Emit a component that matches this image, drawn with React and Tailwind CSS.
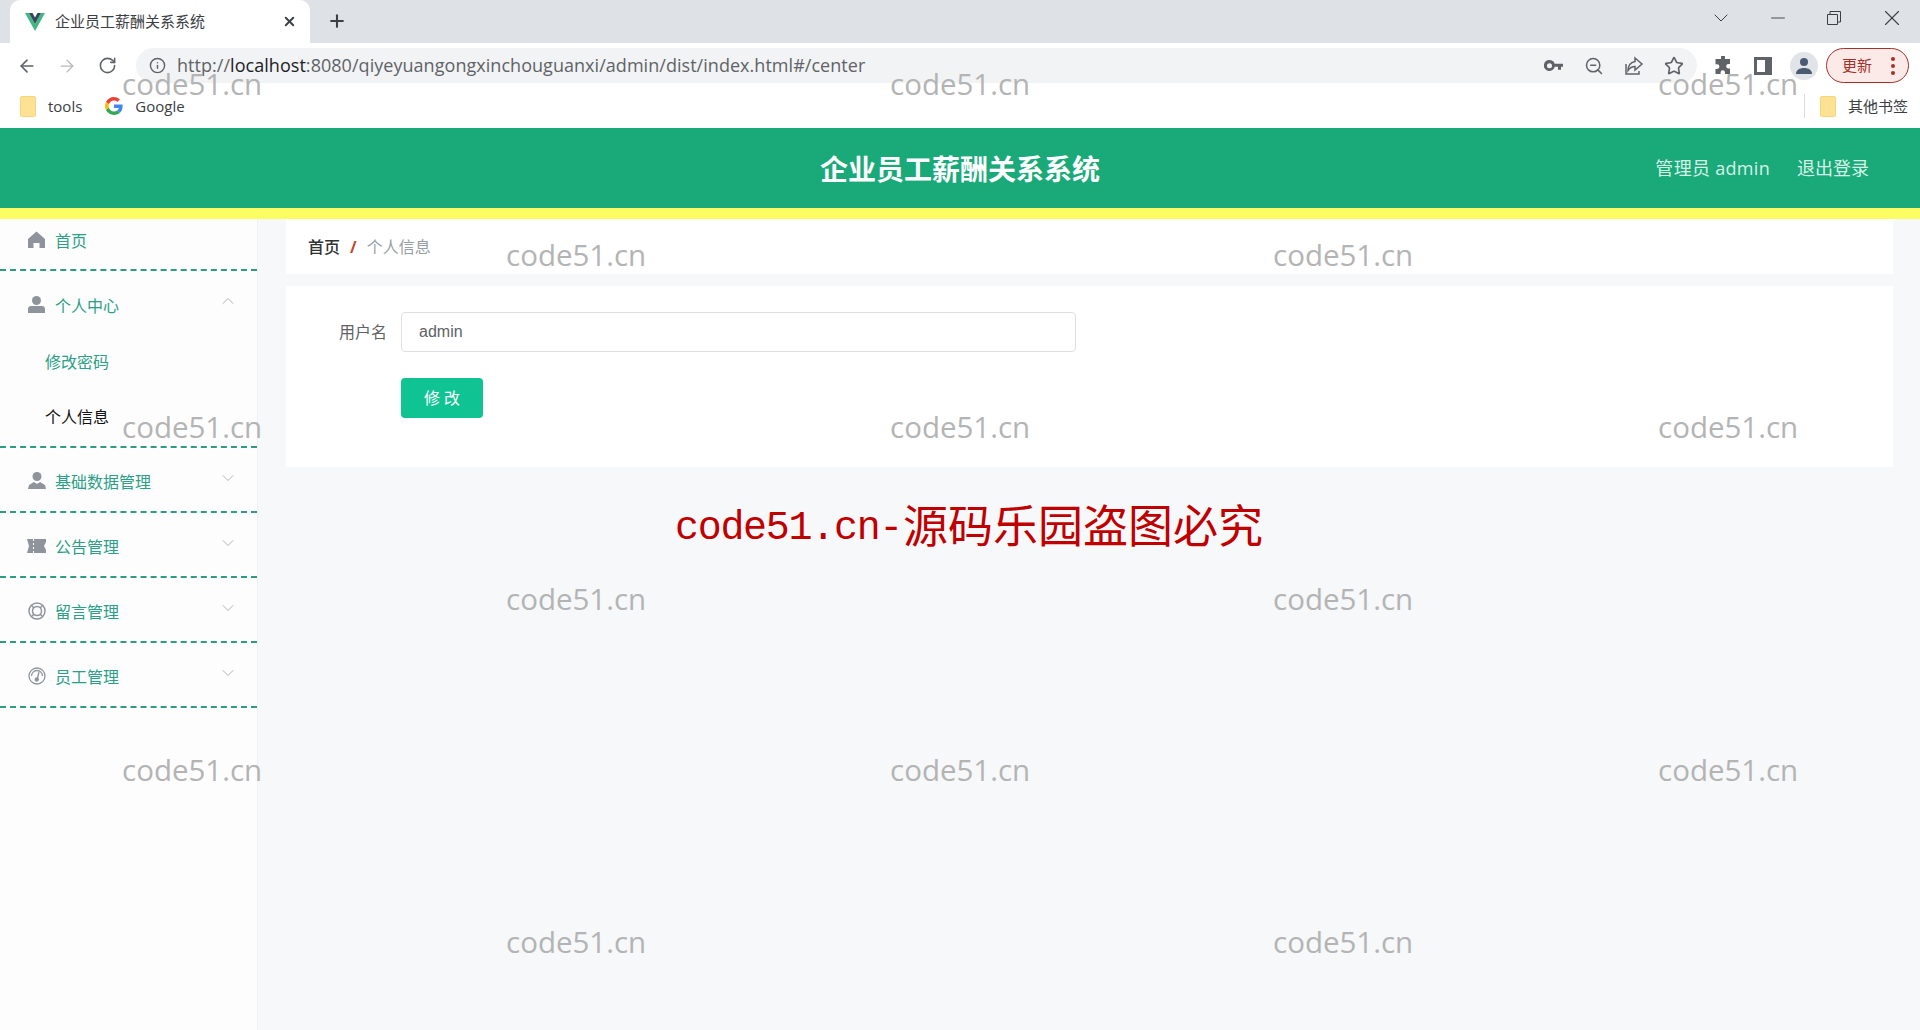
import { ArrowLeft, ArrowRight, RotateCw, Info, ZoomOut, Star, ChevronDown, ChevronUp, Minus, X, Plus } from 'lucide-react';

const cjk = "font-['Open_Sans','Noto_Sans_CJK_SC',sans-serif]";

function Folder() {
    return <div className="w-[16px] h-[21px] rounded-[2px] bg-[#fde293] border border-[#f5d778]"></div>;
}

function GoogleG() {
    return (
        <svg width="18" height="18" viewBox="0 0 48 48">
            <path fill="#EA4335" d="M24 9.5c3.5 0 6.6 1.2 9.1 3.6l6.8-6.8C35.8 2.5 30.3 0 24 0 14.6 0 6.5 5.4 2.6 13.2l7.9 6.2C12.4 13.6 17.7 9.5 24 9.5z" />
            <path fill="#4285F4" d="M46.9 24.5c0-1.6-.1-3.1-.4-4.5H24v9h12.9c-.6 3-2.2 5.5-4.7 7.2l7.7 6c4.4-4.1 7-10.200 7-17.700z" />
            <path fill="#FBBC05" d="M10.500 28.600c-.5-1.400-.8-3-.8-4.600s.3-3.200.8-4.600l-7.900-6.200C.9 16.500 0 20.100 0 24s.9 7.500 2.600 10.800l7.900-6.200z" />
            <path fill="#34A853" d="M24 48c6.500 0 11.900-2.100 15.900-5.800l-7.700-6c-2.100 1.400-4.900 2.300-8.200 2.300-6.300 0-11.600-4.100-13.500-9.900l-7.900 6.200C6.500 42.600 14.600 48 24 48z" />
        </svg>
    );
}

function TabBar() {
    return (
        <div className="h-[43px] bg-[#dee1e6] flex items-start shrink-0">
            <div className="ml-[10px] mt-0 w-[300px] h-[43px] bg-white rounded-t-[10px] flex items-center pl-[15px] pr-[13px]">
                <svg width="20" height="18" viewBox="0 0 20 18">
                    <path fill="#41b883" d="M0 0h4l6 11L16 0h4L10 18z" />
                    <path fill="#35495e" d="M4 0h3.500L10 4.500 12.500 0H16l-6 11z" />
                </svg>
                <span className={`ml-[10px] text-[15px] text-[#3c4043] flex-1 ${cjk}`}>企业员工薪酬关系系统</span>
                <X size={15} strokeWidth={3} className="text-[#3c4043]" />
            </div>
            <Plus size={20} strokeWidth={2.5} className="ml-[17px] mt-[11px] text-[#3c4043]" />
            <div className="ml-auto flex items-center text-[#3c4043] pt-[5px] pr-[15px]">
                <ChevronDown size={24} strokeWidth={1} />
                <Minus size={22} strokeWidth={1} className="ml-[34px]" />
                <svg width="16" height="16" viewBox="0 0 16 16" fill="none" stroke="currentColor" className="ml-[37px]">
                    <path d="M1.500 4.500h10v10h-10zM4 4.500V1.500h10.500V12h-3" />
                </svg>
                <X size={26} strokeWidth={1} className="ml-[37px]" />
            </div>
        </div>
    );
}

function Toolbar() {
    return (
        <div className="h-[45px] bg-white flex items-center shrink-0 pl-[17px] pr-[10px]">
            <ArrowLeft size={20} strokeWidth={2} className="text-[#5f6368]" />
            <ArrowRight size={20} strokeWidth={1.5} className="ml-[20px] text-[#b5b8bc]" />
            <RotateCw size={19} strokeWidth={2} className="ml-[21px] text-[#5f6368]" />
            <div className="ml-[19px] w-[1561px] h-[35px] bg-[#f1f3f4] rounded-full flex items-center pl-[13px] pr-[13px]">
                <Info size={17} strokeWidth={2} className="text-[#5f6368]" />
                <span className="ml-[11px] text-[18px] tracking-[0.04px] text-[#5f6368] font-['Open_Sans',sans-serif] flex-1">
                    http://<span className="text-[#202124]">localhost</span>:8080/qiyeyuangongxinchouguanxi/admin/dist/index.html#/center
                </span>
                <svg width="19" height="12" viewBox="0 0 19 12" fill="#5f6368">
                    <path fillRule="evenodd" d="M5.500 0a5.500 5.500 0 0 1 5.200 3.700H19v3h-2v3h-3v-3h-3.300A5.500 5.500 0 1 1 5.500 0zm0 3.200a2.500 2.500 0 1 0 0 5 2.500 2.500 0 0 0 0-5z" />
                </svg>
                <ZoomOut size={20} strokeWidth={1.8} className="ml-[21px] text-[#5f6368]" />
                <svg width="20" height="20" viewBox="0 0 20 20" fill="none" stroke="#5f6368" strokeWidth="1.500" className="ml-[20px]">
                    <path d="M2 8v10h13v-3M11 2l7 6-7 6v-3.500c-3 0-5 1-7 4 0-5 3-8 7-9z" />
                </svg>
                <Star size={20} strokeWidth={2} className="ml-[20px] text-[#5f6368]" />
            </div>
            <svg width="20" height="20" viewBox="0 0 20 20" fill="#5f6368" className="ml-[16px]">
                <path d="M8 1a2 2 0 0 1 4 0v2h5v5h-1.500a2.300 2.300 0 0 0 0 4.600H17V18h-5v-1.500a2.200 2.200 0 0 0-4.400 0V18H2.500v-5H4a2.400 2.400 0 0 0 0-4.800H2.500V3H8z" />
            </svg>
            <svg width="18" height="18" viewBox="0 0 18 18" className="ml-[21px]">
                <path fill="#5f6368" fillRule="evenodd" d="M0 0h18v18H0zM3 3v12h8V3z" />
            </svg>
            <div className="ml-[18px] w-[28px] h-[28px] rounded-full bg-[#e0e3e8] flex items-center justify-center">
                <svg width="18" height="18" viewBox="0 0 18 18" fill="#4a5a70">
                    <circle cx="9" cy="5" r="4" />
                    <path d="M1 17c0-4 3.500-6 8-6s8 2 8 6z" />
                </svg>
            </div>
            <div className="ml-[8px] w-[83px] h-[35px] rounded-full bg-[#fbeae8] border border-[#a5302a] flex items-center pl-[15px] pr-[13px] justify-between">
                <span className={`text-[15px] text-[#a5302a] ${cjk}`}>更新</span>
                <div className="flex flex-col gap-[3px]">
                    <div className="w-[4px] h-[4px] rounded-full bg-[#a5302a]"></div>
                    <div className="w-[4px] h-[4px] rounded-full bg-[#a5302a]"></div>
                    <div className="w-[4px] h-[4px] rounded-full bg-[#a5302a]"></div>
                </div>
            </div>
        </div>
    );
}

function Bookmarks() {
    return (
        <div className={`h-[40px] bg-white flex items-center shrink-0 pl-[20px] pr-[12px] pb-[4px] text-[15px] text-[#3c4043] ${cjk}`}>
            <Folder />
            <span className="ml-[12px]">tools</span>
            <div className="ml-[23px]"><GoogleG /></div>
            <span className="ml-[12px]">Google</span>
            <div className="ml-auto h-[24px] border-l border-[#dadce0] mr-[15px]"></div>
            <Folder />
            <span className="ml-[12px] text-[15px]">其他书签</span>
        </div>
    );
}

function Header() {
    return (
        <div className={`shrink-0 relative h-[80px] bg-[#1aa979] flex items-center justify-end pr-[51px] ${cjk}`}>
            <div className="absolute left-0 right-0 top-[20px] text-center text-[28px] font-bold text-white">企业员工薪酬关系系统</div>
            <span className="text-[18px] tracking-[0.3px] text-[#d6f3e6]">管理员 admin</span>
            <span className="ml-[27px] text-[18px] text-[#d6f3e6]">退出登录</span>
        </div>
    );
}

const gray = '#8f949c';

const icons = {
    home: (
        <svg width="17" height="17" viewBox="0 0 17 17" fill={gray}>
            <path d="M8.500 0.500 17 8v9h-5.500v-5h-6v5H0V8z" />
        </svg>
    ),
    user: (
        <svg width="17" height="18" viewBox="0 0 17 18" fill={gray}>
            <circle cx="8.500" cy="4.500" r="4.500" />
            <path d="M0 13c0-2 1.500-3 3-3h11c1.500 0 3 1 3 3v4H0z" />
        </svg>
    ),
    people: (
        <svg width="18" height="18" viewBox="0 0 18 18" fill={gray}>
            <circle cx="9" cy="4.500" r="4.500" />
            <path d="M0 17l1-4 5-3 3 2 3-2 5 3 1 4z" />
        </svg>
    ),
    ticket: (
        <svg width="19" height="14" viewBox="0 0 19 14" fill={gray}>
            <path d="M0 0h6v2h1V0h12v3l-2 4 2 4v3H7v-2H6v2H0l2-7zM6 4v2h1V4zM6 8v2h1V8z" />
        </svg>
    ),
    ring: (
        <svg width="18" height="18" viewBox="0 0 18 18" fill="none" stroke={gray} strokeWidth="1.500">
            <circle cx="9" cy="9" r="8" />
            <circle cx="9" cy="9" r="4.500" />
            <path d="M3.500 3.500l2.500 2.500M14.500 3.500 12 6M3.500 14.500 6 12M14.500 14.500 12 12" />
        </svg>
    ),
    gauge: (
        <svg width="18" height="18" viewBox="0 0 18 18" fill="none" stroke={gray} strokeWidth="1.300">
            <circle cx="9" cy="9" r="8" />
            <path d="M3.500 9a5.500 5.500 0 0 1 11 0" />
            <path d="M11 5 9.300 12" />
            <circle cx="8.800" cy="12.500" r="1.500" fill={gray} />
        </svg>
    ),
};

function Arrow({ open }) {
    const Icon = open ? ChevronUp : ChevronDown;
    return <Icon size={20} strokeWidth={1} className="text-[#a0a4ab] absolute right-[19px] top-[20px]" />;
}

function MenuRow({ icon, label, hasArrow, open, height }) {
    return (
        <div className={`relative flex items-center pl-[27px] ${height}`}>
            <div className="w-[19px] flex justify-center -translate-y-[1px]">{icons[icon]}</div>
            <span className="ml-[9px] text-[16px] text-[#2ba084]">{label}</span>
            {hasArrow && <Arrow open={open} />}
        </div>
    );
}

function Sidebar() {
    const rows = [
        ['people', '基础数据管理'],
        ['ticket', '公告管理'],
        ['ring', '留言管理'],
        ['gauge', '员工管理'],
    ];
    return (
        <div className={`w-[258px] shrink-0 bg-[#fdfdfe] border-r border-[#eef0f3] ${cjk}`}>
            <div className="border-b-2 border-dashed border-[#2f9c82] h-[52px]">
                <MenuRow icon="home" label="首页" height="h-[43px]" />
            </div>
            <div className="border-b-2 border-dashed border-[#2f9c82] h-[177px]">
                <MenuRow icon="user" label="个人中心" hasArrow open height="h-[65px] pt-[5px]" />
                <div className="h-[52px] flex items-center pl-[45px] text-[16px] text-[#2ba084]">修改密码</div>
                <div className="h-[58px] flex items-center pl-[45px] text-[16px] text-[#111]">个人信息</div>
            </div>
            {rows.map(([icon, label]) => (
                <div key={label} className="border-b-2 border-dashed border-[#2f9c82] h-[65px]">
                    <MenuRow icon={icon} label={label} hasArrow height="h-[63px] pt-[5px]" />
                </div>
            ))}
        </div>
    );
}

function Main() {
    return (
        <div className={`flex-1 bg-[#f6f8fa] pl-[28px] pr-[27px] ${cjk}`}>
            <div className="h-[55px] bg-white flex items-center pl-[22px] text-[16px]">
                <span className="font-medium text-[#303133]">首页</span>
                <span className="mx-[10px] font-bold text-[#c0492f]">/</span>
                <span className="text-[#97a0a8]">个人信息</span>
            </div>
            <div className="mt-[12px] h-[181px] bg-white pt-[26px]">
                <div className="flex items-center h-[40px]">
                    <div className="w-[101px] text-right text-[16px] text-[#606266]">用户名</div>
                    <div className="ml-[14px] w-[675px] h-[40px] border border-[#dcdfe6] rounded-[4px] flex items-center pl-[17px] text-[16px] text-[#606266] font-['Liberation_Sans',sans-serif]">admin</div>
                </div>
                <div className="mt-[26px] ml-[115px] w-[82px] h-[40px] rounded-[4px] bg-[#0fc393] flex items-center justify-center text-[16px] text-white">修 改</div>
            </div>
        </div>
    );
}

// 水印，盖在页面最上层
const marks = [
    [122, 65], [890, 65], [1658, 65],
    [506, 236], [1273, 236],
    [122, 408], [890, 408], [1658, 408],
    [506, 580], [1273, 580],
    [122, 751], [890, 751], [1658, 751],
    [506, 923], [1273, 923],
];

export default function App() {
    return (
        <div className="relative w-[1920px] h-[1030px] overflow-hidden flex flex-col bg-white">
            <TabBar />
            <Toolbar />
            <Bookmarks />
            <Header />
            <div className="h-[11px] bg-[#fbfd62] shrink-0"></div>
            <div className="flex flex-1">
                <Sidebar />
                <Main />
            </div>
            {marks.map(([x, y]) => (
                <div
                    key={`${x}-${y}`}
                    className="absolute text-[29.5px] leading-[38px] text-[#b4b4b4] font-['Open_Sans',sans-serif] pointer-events-none"
                    style={{ left: x, top: y }}
                >
                    code51.cn
                </div>
            ))}
            <div className="absolute left-[675px] top-[492px] h-[66px] flex items-center text-[#c00000] whitespace-nowrap">
                <span className="text-[40px] tracking-[-1.3px] translate-y-[4px] font-['Liberation_Mono',monospace]">code51.cn-</span>
                <span className="text-[45px] -translate-y-[1px] ml-[1px] font-['Noto_Sans_CJK_SC',sans-serif]">源码乐园盗图必究</span>
            </div>
        </div>
    );
}
